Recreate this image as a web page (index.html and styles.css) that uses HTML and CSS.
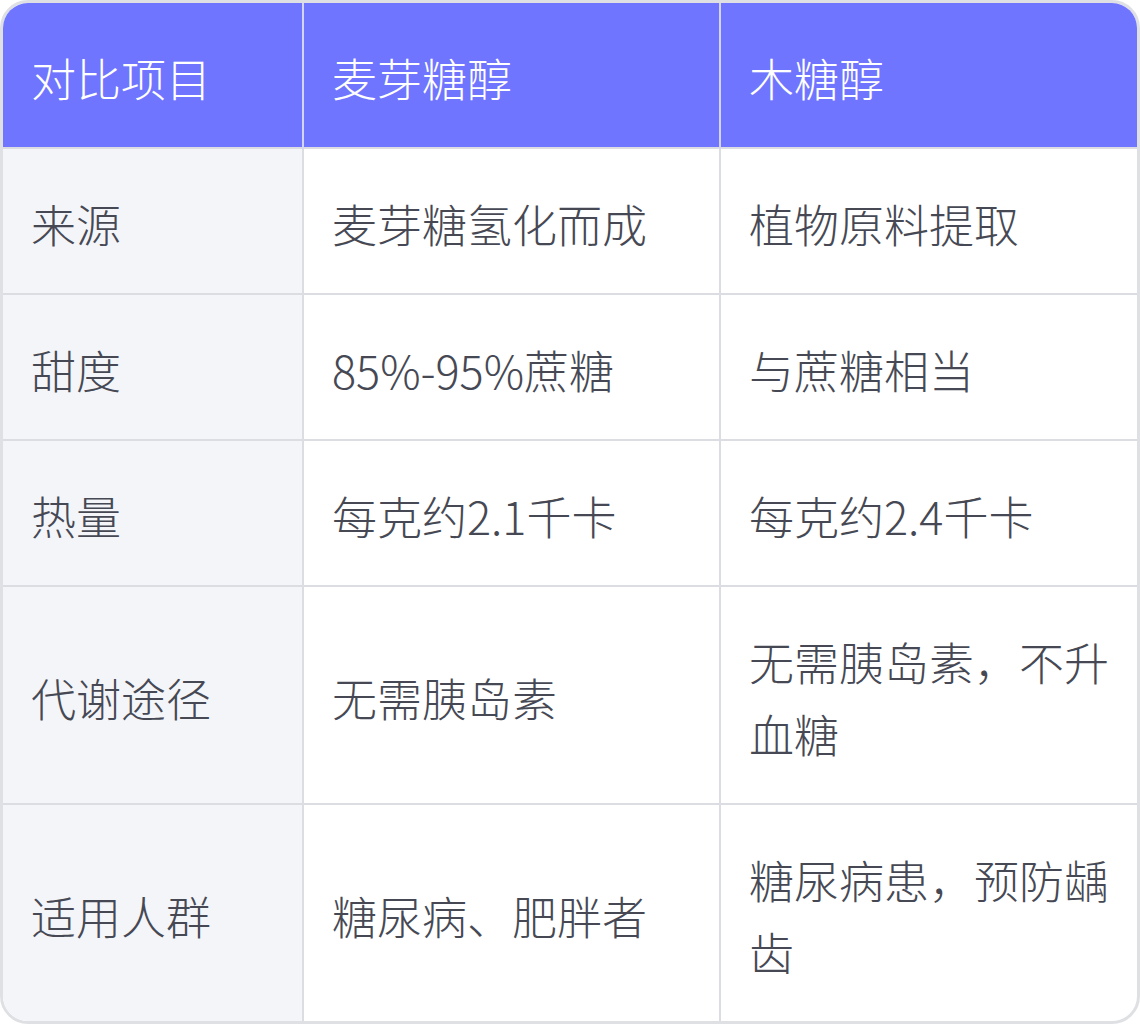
FILE: index.html
```html
<!DOCTYPE html>
<html lang="zh-CN">
<head>
<meta charset="utf-8">
<link rel="stylesheet" href="styles.css">
</head>
<body>
<div class="card">
  <table class="cmp">
    <colgroup>
      <col class="c1"><col class="c2"><col class="c3">
    </colgroup>
    <thead>
      <tr><th>对比项目</th><th>麦芽糖醇</th><th>木糖醇</th></tr>
    </thead>
    <tbody>
      <tr><td>来源</td><td>麦芽糖氢化而成</td><td>植物原料提取</td></tr>
      <tr><td>甜度</td><td>85%-95%蔗糖</td><td>与蔗糖相当</td></tr>
      <tr><td>热量</td><td>每克约2.1千卡</td><td>每克约2.4千卡</td></tr>
      <tr><td>代谢途径</td><td>无需胰岛素</td><td>无需胰岛素，不升血糖</td></tr>
      <tr><td>适用人群</td><td>糖尿病、肥胖者</td><td>糖尿病患，预防龋齿</td></tr>
    </tbody>
  </table>
</div>
</body>
</html>
```

FILE: styles.css
```css
html, body {
  margin: 0;
  padding: 0;
  background: #ffffff;
}
.card {
  width: 1134px;
  border: 3px solid #dfe0e4;
  border-radius: 28px;
  overflow: hidden;
  background: #ffffff;
}
.cmp {
  width: 1134px;
  border-collapse: collapse;
  table-layout: fixed;
  font-family: "Noto Sans CJK SC", "Noto Sans", sans-serif;
  font-weight: 300;
  font-size: 45px;
  line-height: 72px;
}
.c1 { width: 300px; }
.c2 { width: 417px; }
.c3 { width: 417px; }
.cmp th, .cmp td {
  padding: 39px 26px 33px 28px;
  text-align: left;
  vertical-align: middle;
}
.cmp th {
  background: #6f75ff;
  color: #ffffff;
  font-weight: 300;
  border-left: 2px solid #d3d5f3;
}
.cmp th:first-child { border-left: none; }
.cmp td {
  color: #464954;
  border-left: 2px solid #dcdde2;
  border-top: 2px solid #dcdde2;
}
.cmp td:first-child {
  border-left: none;
  background: #f4f5f9;
}
```
